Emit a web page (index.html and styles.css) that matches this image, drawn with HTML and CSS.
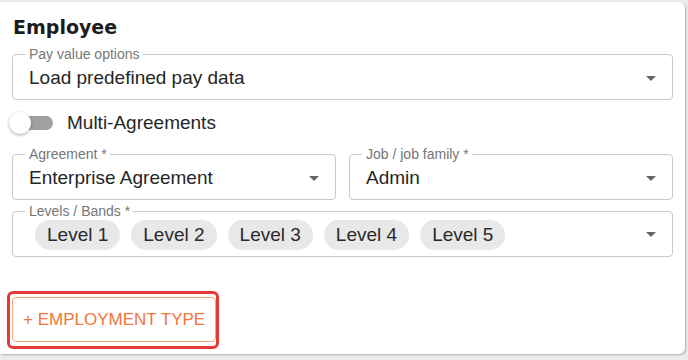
FILE: index.html
```html
<!DOCTYPE html>
<html>
<head>
<meta charset="utf-8">
<link rel="stylesheet" href="styles.css">
</head>
<body>
<div class="card">
  <h2 class="title">Employee</h2>
  <div class="field">
    <span class="label">Pay value options</span>
    <span class="value">Load predefined pay data</span>
    <span class="arrow"></span>
  </div>
  <div class="switch-row">
    <span class="switch"><span class="thumb"></span><span class="track"></span></span>
    <span class="switch-label">Multi-Agreements</span>
  </div>
  <div class="row">
    <div class="field">
      <span class="label">Agreement *</span>
      <span class="value">Enterprise Agreement</span>
      <span class="arrow"></span>
    </div>
    <div class="field">
      <span class="label">Job / job family *</span>
      <span class="value">Admin</span>
      <span class="arrow"></span>
    </div>
  </div>
  <div class="field levels">
    <span class="label">Levels / Bands *</span>
    <div class="chips">
      <span class="chip">Level 1</span>
      <span class="chip">Level 2</span>
      <span class="chip">Level 3</span>
      <span class="chip">Level 4</span>
      <span class="chip">Level 5</span>
    </div>
    <span class="arrow"></span>
  </div>
  <div class="btn-wrap"><button class="btn">+ EMPLOYMENT TYPE</button></div>
</div>
</body>
</html>
```
FILE: styles.css
```css
* { box-sizing: border-box; }
html, body { margin: 0; padding: 0; }
body {
  background: #ebebeb;
  font-family: "Liberation Sans", Arial, sans-serif;
  width: 688px;
  height: 360px;
  overflow: hidden;
}
.card {
  margin-top: 2px;
  width: 685px;
  height: 352px;
  background: #fff;
  border-radius: 0 6px 6px 0;
  box-shadow: 1px 1px 2px rgba(0,0,0,0.25);
  padding: 13px 12px 0 12px;
  display: flex;
  flex-direction: column;
}
.title {
  margin: 0 0 0 1px;
  font-family: "DejaVu Sans", sans-serif;
  font-weight: 700;
  font-size: 19px;
  line-height: 24px;
  color: #1c1c1c;
}
.field {
  position: relative;
  height: 46px;
  border: 1px solid #c8c8c8;
  border-radius: 4px;
  display: flex;
  align-items: center;
  padding: 2px 16px 0 16px;
  margin-top: 15px;
}
.label {
  position: absolute;
  top: -8px;
  left: 12px;
  padding: 0 3px 0 4px;
  background: #fff;
  font-size: 14px;
  line-height: 14px;
  color: #777;
}
.value {
  flex: 1;
  font-size: 19px;
  color: #262626;
}
.arrow {
  width: 0;
  height: 0;
  border-left: 5px solid transparent;
  border-right: 5px solid transparent;
  border-top: 5px solid #666;
}
.switch-row {
  display: flex;
  align-items: center;
  margin-top: 12px;
  height: 22px;
}
.switch {
  display: flex;
  align-items: center;
  margin-left: -3px;
}
.thumb {
  position: relative;
  z-index: 1;
  width: 22px;
  height: 22px;
  border-radius: 50%;
  background: #fff;
  box-shadow: 0 1px 3px rgba(0,0,0,0.35);
}
.track {
  width: 34px;
  height: 14px;
  border-radius: 7px;
  background: #a0a0a0;
  margin-left: -12px;
}
.switch-label {
  margin-left: 14px;
  font-size: 19px;
  color: #262626;
}
.row {
  display: flex;
  gap: 13px;
  margin-top: 5px;
}
.row .field { flex: 1; }
.levels {
  margin-top: 11px;
  padding-left: 22px;
  padding-top: 1px;
}
.chips {
  flex: 1;
  display: flex;
  gap: 11px;
}
.chip {
  height: 30px;
  line-height: 30px;
  padding: 0 12px;
  border-radius: 15px;
  background: #e8e8e8;
  font-size: 19px;
  color: #2a2a2a;
}
.btn-wrap {
  align-self: flex-start;
  margin-top: 34px;
  margin-left: -5px;
  border: 3px solid #e53935;
  border-radius: 6px;
  padding: 3px 0 4px 2px;
}
.btn {
  height: 45px;
  border: 1px solid #f5a47a;
  border-radius: 4px;
  background: #fff;
  color: #f2763a;
  font-family: "Liberation Sans", Arial, sans-serif;
  font-size: 17px;
  padding: 0 10px;
  white-space: nowrap;
  text-align: center;
}
```
